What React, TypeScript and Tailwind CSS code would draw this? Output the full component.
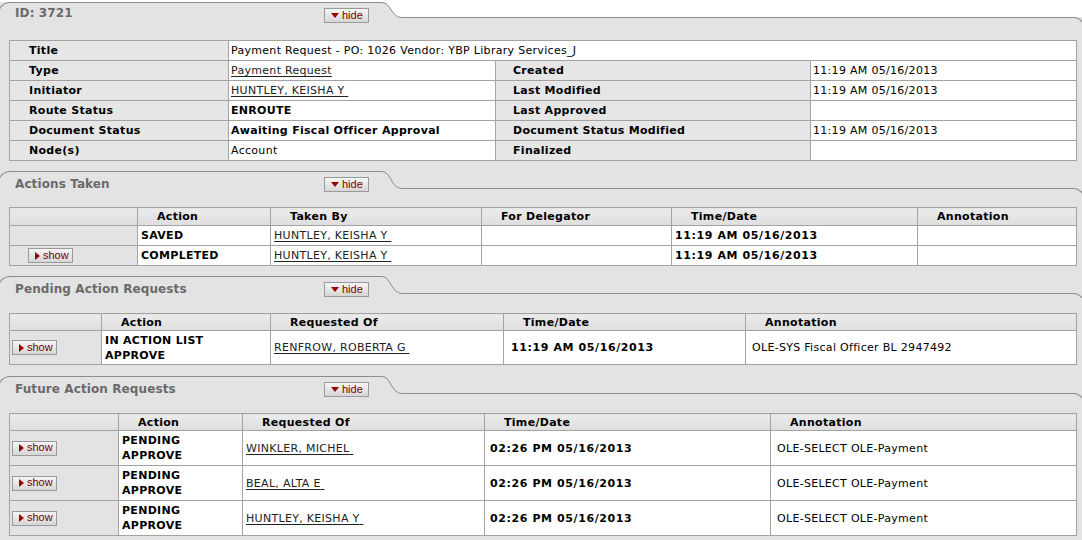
import React from "react";

const font = "font-['DejaVu_Sans',Verdana,sans-serif]";

const Tri = ({ dir }: { dir: "down" | "right" }) =>
	dir === "down" ? (
		<svg width="8" height="5" viewBox="0 0 8 5" className="shrink-0">
			<path d="M0 0 L8 0 L4 5 Z" fill="#9b0000" />
		</svg>
	) : (
		<svg width="5" height="8" viewBox="0 0 5 8" className="shrink-0">
			<path d="M0 0 L5 4 L0 8 Z" fill="#9b0000" />
		</svg>
	);

const ToggleButton = ({ label }: { label: "hide" | "show" }) => (
	<button
		type="button"
		className="flex h-[15px] w-[45px] items-center gap-[3px] border border-[#9a9a9a] bg-gradient-to-b from-[#f6f6f6] to-[#d6d6d6] pl-[6px] font-['Liberation_Sans',Arial,sans-serif] text-[11px] leading-none tracking-normal text-[#7a0000]"
	>
		<Tri dir={label === "hide" ? "down" : "right"} />
		<span className="-mt-px">{label}</span>
	</button>
);

// タブ型の見出し（左のタブ + 曲線 + 右側の罫線）
const SectionHeader = ({
	title,
	h,
	topColor,
	titlePt,
	btnMt,
}: {
	title: string;
	h: number;
	topColor: string;
	titlePt: string;
	btnMt: string;
}) => (
	<div className="flex bg-[#e3e3e3]">
		<div className="flex w-[384px] shrink-0 rounded-tl-[12px] border-t border-l border-[#8c8c8c]">
			<div
				className={`w-[325px] pl-[16px] ${titlePt} text-[12px] font-bold leading-[14px] tracking-[0.1px] text-[#6a6a6a]`}
			>
				{title}
			</div>
			<div className={btnMt}>
				<ToggleButton label="hide" />
			</div>
		</div>
		<svg width="20" height={h + 1} viewBox={`0 0 20 ${h + 1}`} className="shrink-0">
			<rect x="0" y="0" width="20" height={h + 1} fill={topColor} />
			<path
				d={`M0 0.5 C 9 0.5, 9 ${h + 0.5}, 20 ${h + 0.5} L20 ${h + 1} L0 ${h + 1} Z`}
				fill="#e3e3e3"
			/>
			<path
				d={`M0 0.5 C 9 0.5, 9 ${h + 0.5}, 20 ${h + 0.5}`}
				fill="none"
				stroke="#8c8c8c"
			/>
		</svg>
		<div className="flex flex-1 flex-col">
			<div style={{ height: h, background: topColor }} />
			<div className="h-[12px] rounded-tr-[10px] border-t border-r border-[#8c8c8c]" />
		</div>
	</div>
);

const Link = ({ children }: { children: React.ReactNode }) => (
	<span className="text-[#222] underline underline-offset-[2px]">{children}</span>
);

const Stamp = ({ children }: { children: React.ReactNode }) => (
	<b className="tracking-[0.6px]">{children}</b>
);

const cell = "border border-[#a3a3a3] p-0 align-middle";
const label = `${cell} bg-[#e6e6e6] font-bold`;
const val = `${cell} bg-white pl-[2px]`;

const DocInfo = () => (
	<table className="w-[1068px] table-fixed border-collapse text-[11px] leading-[13px] text-black">
		<colgroup>
			<col className="w-[219px]" />
			<col className="w-[267px]" />
			<col className="w-[315px]" />
			<col />
		</colgroup>
		<tbody>
			<tr className="h-[20px]">
				<td className={`${label} pl-[19px]`}>Title</td>
				<td className={val} colSpan={3}>
					Payment Request - PO: 1026 Vendor: YBP Library Services_J
				</td>
			</tr>
			{[
				["Type", <Link>Payment Request</Link>, "Created", "11:19 AM 05/16/2013"],
				["Initiator", <Link>HUNTLEY, KEISHA Y&nbsp;</Link>, "Last Modified", "11:19 AM 05/16/2013"],
				["Route Status", <b>ENROUTE</b>, "Last Approved", ""],
				[
					"Document Status",
					<b>Awaiting Fiscal Officer Approval</b>,
					"Document Status Modified",
					"11:19 AM 05/16/2013",
				],
				["Node(s)", "Account", "Finalized", ""],
			].map((r, i) => (
				<tr key={i} className="h-[20px]">
					<td className={`${label} pl-[19px]`}>{r[0]}</td>
					<td className={val}>{r[1]}</td>
					<td className={`${label} pl-[17px]`}>{r[2]}</td>
					<td className={val}>{r[3]}</td>
				</tr>
			))}
		</tbody>
	</table>
);

type Col = { w?: string; pad: string; head: string };

const DataTable = ({
	cols,
	rows,
	rowH,
	headH,
	btnPad,
}: {
	cols: Col[];
	rows: { show: boolean; cells: React.ReactNode[] }[];
	rowH: string;
	headH: string;
	btnPad: string;
}) => (
	<table className="w-[1068px] table-fixed border-collapse text-[11px] leading-[15px] text-black">
		<colgroup>
			{cols.map((c, i) => (
				<col key={i} className={c.w} />
			))}
		</colgroup>
		<thead>
			<tr className={headH}>
				{cols.map((c, i) => (
					<th
						key={i}
						className={`${cell} bg-gradient-to-b from-[#ebebeb] to-[#dedede] pl-[19px] text-left font-bold`}
					>
						{c.head}
					</th>
				))}
			</tr>
		</thead>
		<tbody>
			{rows.map((r, i) => (
				<tr key={i} className={rowH}>
					<td className={`${cell} bg-[#e3e3e3] ${btnPad}`}>
						{r.show && <ToggleButton label="show" />}
					</td>
					{r.cells.map((c, j) => (
						<td key={j} className={`${cell} bg-white ${cols[j + 1].pad}`}>
							{c}
						</td>
					))}
				</tr>
			))}
		</tbody>
	</table>
);

export default function App() {
	return (
		<div className={`w-[1082px] h-[540px] overflow-hidden bg-white tracking-[0.3px] ${font}`}>
			<div className="-ml-[2px] w-[1086px] pt-[2px]">
				{/* ID */}
				<SectionHeader title="ID: 3721" h={15} topColor="#ffffff" titlePt="pt-[3px]" btnMt="mt-[5px]" />
				<div className="bg-[#e3e3e3] pl-[11px] pt-[11px] pb-[10px]">
					<DocInfo />
				</div>

				{/* Actions Taken */}
				<SectionHeader title="Actions Taken" h={17} topColor="#e3e3e3" titlePt="pt-[5px]" btnMt="mt-[5px]" />
				<div className="bg-[#e3e3e3] pl-[11px] pt-[7px] pb-[10px]">
					<DataTable
						headH="h-[18px]"
						rowH="h-[20px]"
						btnPad="pl-[18px]"
						cols={[
							{ w: "w-[128px]", pad: "", head: "" },
							{ w: "w-[133px]", pad: "pl-[3px]", head: "Action" },
							{ w: "w-[211px]", pad: "pl-[3px]", head: "Taken By" },
							{ w: "w-[190px]", pad: "pl-[3px]", head: "For Delegator" },
							{ w: "w-[246px]", pad: "pl-[3px]", head: "Time/Date" },
							{ pad: "pl-[3px]", head: "Annotation" },
						]}
						rows={[
							{
								show: false,
								cells: [<b>SAVED</b>, <Link>HUNTLEY, KEISHA Y&nbsp;</Link>, "", <Stamp>11:19 AM 05/16/2013</Stamp>, ""],
							},
							{
								show: true,
								cells: [<b>COMPLETED</b>, <Link>HUNTLEY, KEISHA Y&nbsp;</Link>, "", <Stamp>11:19 AM 05/16/2013</Stamp>, ""],
							},
						]}
					/>
				</div>

				{/* Pending Action Requests */}
				<SectionHeader title="Pending Action Requests" h={17} topColor="#e3e3e3" titlePt="pt-[5px]" btnMt="mt-[5px]" />
				<div className="bg-[#e3e3e3] pl-[11px] pt-[8px] pb-[11px]">
					<DataTable
						headH="h-[17px]"
						rowH="h-[34px]"
						btnPad="pl-[2px]"
						cols={[
							{ w: "w-[92px]", pad: "", head: "" },
							{ w: "w-[169px]", pad: "pl-[3px]", head: "Action" },
							{ w: "w-[233px]", pad: "pl-[3px]", head: "Requested Of" },
							{ w: "w-[242px]", pad: "pl-[7px]", head: "Time/Date" },
							{ pad: "pl-[6px]", head: "Annotation" },
						]}
						rows={[
							{
								show: true,
								cells: [
									<b>
										IN ACTION LIST
										<br />
										APPROVE
									</b>,
									<Link>RENFROW, ROBERTA G&nbsp;</Link>,
									<Stamp>11:19 AM 05/16/2013</Stamp>,
									"OLE-SYS Fiscal Officer BL 2947492",
								],
							},
						]}
					/>
				</div>

				{/* Future Action Requests */}
				<SectionHeader title="Future Action Requests" h={17} topColor="#e3e3e3" titlePt="pt-[5px]" btnMt="mt-[5px]" />
				<div className="bg-[#e3e3e3] pl-[11px] pt-[8px] pb-[20px]">
					<DataTable
						headH="h-[17px]"
						rowH="h-[35px]"
						btnPad="pl-[2px]"
						cols={[
							{ w: "w-[109px]", pad: "", head: "" },
							{ w: "w-[124px]", pad: "pl-[3px]", head: "Action" },
							{ w: "w-[242px]", pad: "pl-[3px]", head: "Requested Of" },
							{ w: "w-[286px]", pad: "pl-[5px]", head: "Time/Date" },
							{ pad: "pl-[6px]", head: "Annotation" },
						]}
						rows={["WINKLER, MICHEL", "BEAL, ALTA E", "HUNTLEY, KEISHA Y"].map((n) => ({
							show: true,
							cells: [
								<b>
									PENDING
									<br />
									APPROVE
								</b>,
								<Link>{n}&nbsp;</Link>,
								<Stamp>02:26 PM 05/16/2013</Stamp>,
								"OLE-SELECT OLE-Payment",
							],
						}))}
					/>
				</div>
			</div>
		</div>
	);
}
